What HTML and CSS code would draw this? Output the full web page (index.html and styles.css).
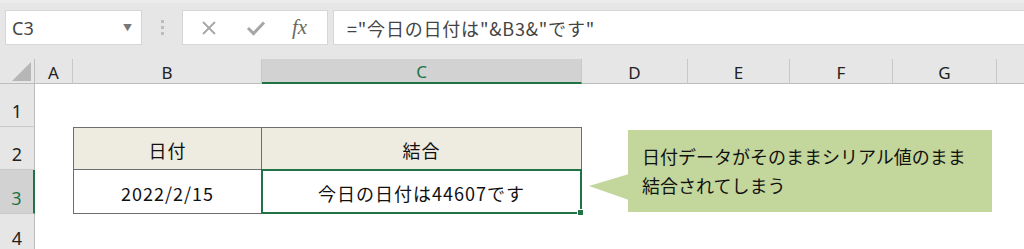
FILE: index.html
```html
<!DOCTYPE html>
<html>
<head>
  <meta charset="UTF-8" />
  <title>Excel - 日付の結合</title>
  <link rel="stylesheet" href="styles.css">
</head>
<body>
  <div class="formula-bar">
    <div class="name-box">
      <span>C3</span>
      <span class="drop">&#9660;</span>
    </div>
    <div class="grip"><i></i><i></i><i></i></div>
    <div class="fx-box">
      <svg class="ico" width="18" height="18" viewBox="0 0 18 18"><path d="M3 3 L15 15 M15 3 L3 15" stroke="#a6a6a6" stroke-width="1.8" fill="none"/></svg>
      <svg class="ico" width="20" height="18" viewBox="0 0 20 18"><path d="M2 9 L7.5 14.5 L18 3.5" stroke="#a6a6a6" stroke-width="3" fill="none"/></svg>
      <span class="fx">fx</span>
    </div>
    <div class="formula">="今日の日付は"&amp;B3&amp;"です"</div>
  </div>

  <div class="sheet">
    <div class="corner"><span class="tri"></span></div>
    <div class="col-head">A</div>
    <div class="col-head">B</div>
    <div class="col-head active">C</div>
    <div class="col-head">D</div>
    <div class="col-head">E</div>
    <div class="col-head">F</div>
    <div class="col-head">G</div>
    <div class="col-head last"></div>

    <div class="row-head">1</div>
    <div class="cell row-fill"></div>

    <div class="row-head">2</div>
    <div class="cell"></div>
    <div class="cell th first">日付</div>
    <div class="cell th">結合</div>
    <div class="cell row-tail"></div>

    <div class="row-head active">3</div>
    <div class="cell"></div>
    <div class="cell td first">2022/2/15</div>
    <div class="cell td selected">今日の日付は44607です<span class="handle"></span></div>
    <div class="cell row-tail"></div>

    <div class="row-head">4</div>
    <div class="cell row-fill"></div>

    <div class="callout">
      <span class="pointer"></span>
      日付データがそのままシリアル値のまま<br>結合されてしまう
    </div>
  </div>
</body>
</html>
```

FILE: styles.css
```css
body {
  margin: 0;
  background: #fff;
  font-family: "Noto Sans", "Noto Sans CJK JP", sans-serif;
  overflow: hidden;
}
.formula-bar {
  height: 59px;
  background: #e6e6e6;
  border-top: 3px solid #ececec;
  box-sizing: border-box;
  display: flex;
  align-items: flex-start;
  padding: 7px 0 0 5px;
}
.name-box {
  width: 137px;
  height: 35px;
  box-sizing: border-box;
  background: #fff;
  border: 1px solid #d6d6d6;
  display: flex;
  align-items: center;
  justify-content: space-between;
  padding: 0 9px 0 6px;
  color: #444;
  font-size: 18px;
}
.drop {
  font-size: 9px;
  color: #777;
}
.grip {
  width: 40px;
  height: 35px;
  display: flex;
  flex-direction: column;
  align-items: center;
  justify-content: center;
  gap: 3px;
}
.grip i {
  width: 3px;
  height: 3px;
  background: #bdbdbd;
}
.fx-box {
  width: 146px;
  height: 35px;
  box-sizing: border-box;
  background: #fff;
  border: 1px solid #d6d6d6;
  display: flex;
  align-items: center;
  padding: 0 0 0 17px;
  gap: 28px;
}
.fx {
  font-family: "Liberation Serif", "DejaVu Serif", serif;
  font-style: italic;
  font-size: 21px;
  color: #6b6b5b;
  margin-left: -2px;
}
.formula {
  flex: 1;
  margin-left: 5px;
  height: 35px;
  box-sizing: border-box;
  background: #fff;
  border: 1px solid #d6d6d6;
  border-right: none;
  display: flex;
  align-items: center;
  padding-left: 13px;
  font-family: "Noto Sans CJK JP", sans-serif;
  font-size: 18px;
  letter-spacing: 0.8px;
  color: #444;
}

.sheet {
  position: relative;
  display: grid;
  grid-template-columns: 35px 38px 189px 320px 106px 102px 103px 104px 1fr;
  grid-template-rows: 25px 43px 43px 44px 40px;
}
.corner {
  background: #e6e6e6;
  border-right: 1px solid #bdbdbd;
  border-bottom: 1px solid #bdbdbd;
  position: relative;
}
.tri {
  position: absolute;
  right: 3px;
  bottom: 2px;
  width: 0;
  height: 0;
  border-left: 19px solid transparent;
  border-bottom: 19px solid #b6b6b6;
}
.col-head {
  background: #e6e6e6;
  border-right: 1px solid #c8c8c8;
  border-bottom: 1px solid #bdbdbd;
  display: flex;
  align-items: center;
  justify-content: center;
  font-size: 17px;
  color: #222;
  padding-top: 2px;
}
.col-head.active {
  background: #d2d2d2;
  color: #217346;
  border-bottom: 2px solid #217346;
}
.col-head.last {
  border-right: none;
}
.row-head {
  background: #e6e6e6;
  border-right: 1px solid #bdbdbd;
  border-bottom: 1px solid #c8c8c8;
  display: flex;
  align-items: flex-end;
  justify-content: center;
  padding-bottom: 3px;
  box-sizing: border-box;
  font-size: 18px;
  color: #222;
}
.row-head.active {
  background: #d2d2d2;
  color: #217346;
  border-right: 2px solid #217346;
}
.row-fill {
  grid-column: 2 / -1;
}
.row-tail {
  grid-column: 5 / -1;
}
.cell {
  display: flex;
  align-items: center;
  justify-content: center;
  font-family: "Noto Sans CJK JP", sans-serif;
  font-size: 18px;
  letter-spacing: 1px;
  color: #111;
  box-sizing: border-box;
}
.th {
  background: #eeebe1;
  border-top: 1px solid #6e6e6e;
  border-right: 1px solid #6e6e6e;
  border-bottom: 1px solid #6e6e6e;
  padding-top: 2px;
}
.td {
  border-right: 1px solid #6e6e6e;
  border-bottom: 1px solid #6e6e6e;
  padding-top: 2px;
}
.first {
  border-left: 1px solid #6e6e6e;
}
.selected {
  position: relative;
  border: 2px solid #217346;
  margin: -1px 0 0 -1px;
}
.handle {
  position: absolute;
  right: -4px;
  bottom: -4px;
  width: 5px;
  height: 5px;
  background: #217346;
  border: 1px solid #fff;
}
.callout {
  position: absolute;
  left: 628px;
  top: 71px;
  width: 364px;
  height: 82px;
  box-sizing: border-box;
  background: #c3d69b;
  padding: 12px 0 0 14px;
  font-family: "Noto Sans CJK JP", sans-serif;
  font-size: 18px;
  line-height: 29px;
  color: #111;
}
.pointer {
  position: absolute;
  left: -39px;
  top: 44px;
  width: 0;
  height: 0;
  border-top: 12px solid transparent;
  border-bottom: 14px solid transparent;
  border-right: 40px solid #c3d69b;
}
```
